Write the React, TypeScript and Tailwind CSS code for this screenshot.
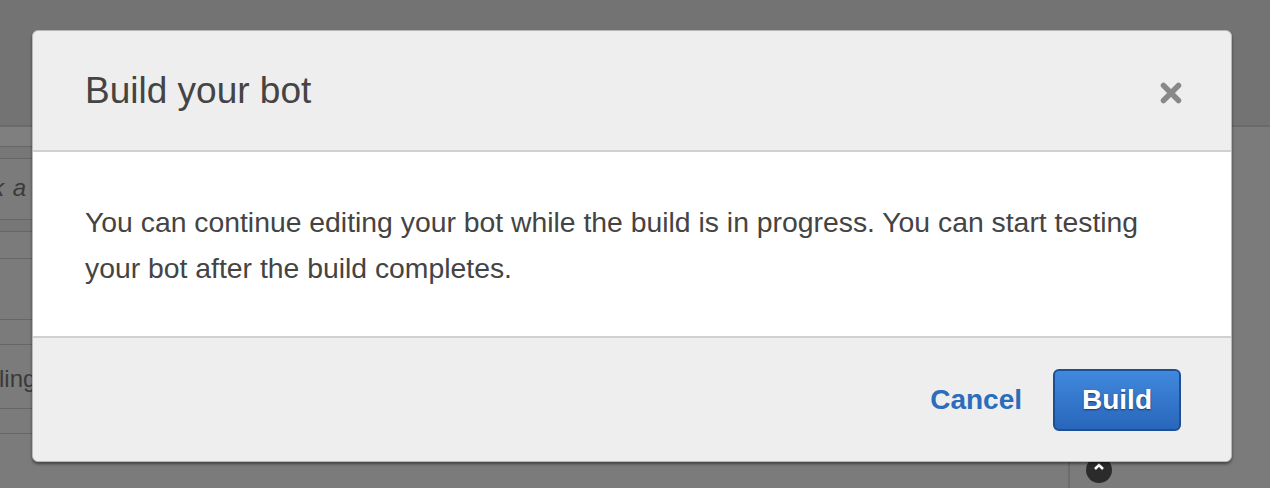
import React from 'react';

const rows = [
  { h: 'h-[20px]', bg: 'bg-[#7f7f7f]', text: '' },
  { h: 'h-[12px]', bg: 'bg-[#777777]', text: '' },
  { h: 'h-[61px]', bg: 'bg-[#7b7b7b]', text: 'k a', italic: true },
  { h: 'h-[12px]', bg: 'bg-[#777777]', text: '' },
  { h: 'h-[27px]', bg: 'bg-[#7b7b7b]', text: '' },
  { h: 'h-[61px]', bg: 'bg-[#7b7b7b]', text: '' },
  { h: 'h-[25px]', bg: 'bg-[#7b7b7b]', text: '' },
  { h: 'h-[64px]', bg: 'bg-[#7b7b7b]', text: 'ling' },
  { h: 'h-[25px]', bg: 'bg-[#7b7b7b]', text: '' },
];

function CloseIcon() {
  return (
    <svg width="24" height="24" viewBox="0 0 24 24" aria-hidden="true">
      <path d="M4.5 4.5 L19.5 19.5 M19.5 4.5 L4.5 19.5" stroke="#888888" strokeWidth="5.5" strokeLinecap="round" />
    </svg>
  );
}

export default function App() {
  return (
    <div className="relative w-[1270px] h-[488px] overflow-hidden bg-[#7b7b7b] font-['Liberation_Sans',Arial,sans-serif]">
      {/* page underneath the overlay */}
      <div className="h-[127px] bg-[#737373] border-b-2 border-[#6a6a6a]" />
      <div className="flex">
        <div className="w-[60px] flex flex-col">
          {rows.map((row, i) => (
            <div
              key={i}
              className={`${row.h} ${row.bg} border-b border-[#666666] flex items-center text-[24px] text-[#3a3a3a] whitespace-nowrap overflow-hidden`}
            >
              {row.text && (
                <span className={row.italic ? 'italic tracking-[1px] ml-[-8px] mt-[-2px]' : 'ml-[-1px] mt-[4px]'}>
                  {row.text}
                </span>
              )}
            </div>
          ))}
        </div>
        <div className="flex-1" />
        <div className="w-[202px] h-[361px] border-l-2 border-[#6c6c6c] pt-[330px] pl-[16px]">
          <div className="w-[26px] h-[26px] rounded-full bg-[#2b2b2b] flex items-start justify-center pt-[6px]">
            <svg width="12" height="8" viewBox="0 0 12 8" aria-hidden="true">
              <path d="M2 6 L6 2 L10 6" stroke="#ffffff" strokeWidth="2.5" fill="none" />
            </svg>
          </div>
        </div>
      </div>

      {/* modal overlay */}
      <div className="absolute inset-0 pt-[30px] pl-[32px]">
        <div className="w-[1200px] rounded-[6px] border border-[#b8b8b8] bg-[#eeeeee] shadow-[0_2px_3px_rgba(0,0,0,0.45)] overflow-hidden">
          <div className="h-[121px] flex items-center justify-between pl-[52px] pr-[48px] border-b-2 border-[#d0d0d0]">
            <h2 className="text-[37px] leading-[44px] text-[#444444]">Build your bot</h2>
            <button className="mt-[4px]">
              <CloseIcon />
            </button>
          </div>
          <div className="bg-white px-[52px] pt-[47px] pb-[45px] border-b-2 border-[#d0d0d0]">
            <p className="text-[28.35px] leading-[46px] text-[#444444]">
              You can continue editing your bot while the build is in progress. You can start testing your bot after the
              build completes.
            </p>
          </div>
          <div className="h-[123px] flex items-center justify-end gap-[31px] pr-[50px]">
            <button className="text-[28px] font-bold text-[#2b6cbc]">Cancel</button>
            <button className="w-[128px] h-[62px] rounded-[6px] border-2 border-[#1e4f92] bg-gradient-to-b from-[#4189de] to-[#2866bb] text-[28px] font-bold text-white [text-shadow:0_1px_2px_rgba(0,0,0,0.5)]">
              Build
            </button>
          </div>
        </div>
      </div>
    </div>
  );
}
